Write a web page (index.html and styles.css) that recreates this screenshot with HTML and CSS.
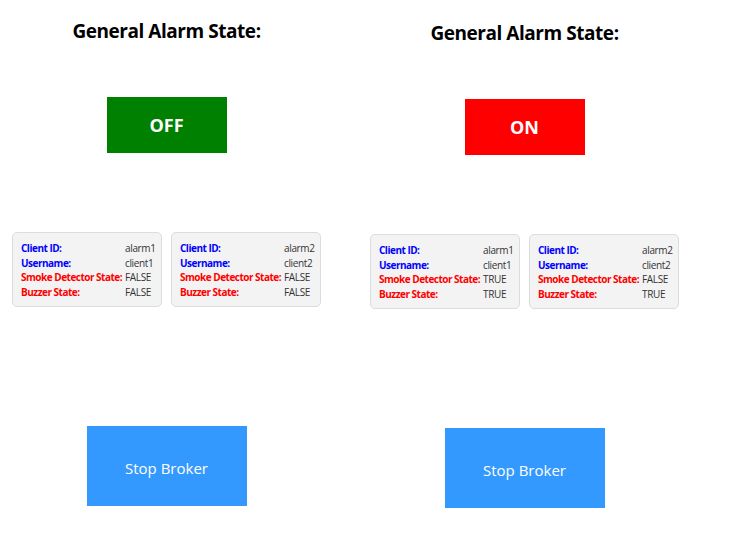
FILE: index.html
```html
<!DOCTYPE html>
<html>
<head>
<meta charset="utf-8">
<link rel="stylesheet" href="styles.css">
</head>
<body>
<div class="screens">
  <section class="panel">
    <h2 class="title">General Alarm State:</h2>
    <div class="state state-off">OFF</div>
    <div class="cards">
      <div class="card">
        <span class="lbl id">Client ID:</span><span class="val">alarm1</span>
        <span class="lbl id">Username:</span><span class="val">client1</span>
        <span class="lbl st">Smoke Detector State:</span><span class="val">FALSE</span>
        <span class="lbl st">Buzzer State:</span><span class="val">FALSE</span>
      </div>
      <div class="card">
        <span class="lbl id">Client ID:</span><span class="val">alarm2</span>
        <span class="lbl id">Username:</span><span class="val">client2</span>
        <span class="lbl st">Smoke Detector State:</span><span class="val">FALSE</span>
        <span class="lbl st">Buzzer State:</span><span class="val">FALSE</span>
      </div>
    </div>
    <button class="broker">Stop Broker</button>
  </section>
  <section class="panel panel-second">
    <h2 class="title">General Alarm State:</h2>
    <div class="state state-on">ON</div>
    <div class="cards">
      <div class="card">
        <span class="lbl id">Client ID:</span><span class="val">alarm1</span>
        <span class="lbl id">Username:</span><span class="val">client1</span>
        <span class="lbl st">Smoke Detector State:</span><span class="val">TRUE</span>
        <span class="lbl st">Buzzer State:</span><span class="val">TRUE</span>
      </div>
      <div class="card">
        <span class="lbl id">Client ID:</span><span class="val">alarm2</span>
        <span class="lbl id">Username:</span><span class="val">client2</span>
        <span class="lbl st">Smoke Detector State:</span><span class="val">FALSE</span>
        <span class="lbl st">Buzzer State:</span><span class="val">TRUE</span>
      </div>
    </div>
    <button class="broker">Stop Broker</button>
  </section>
</div>
</body>
</html>
```
FILE: styles.css
```css
html, body {
  margin: 0;
  padding: 0;
  background: #ffffff;
}
body {
  font-family: "Open Sans", "Noto Sans", sans-serif;
  color: #000;
}
.screens {
  display: flex;
  gap: 25px;
}
.panel {
  width: 333px;
  display: flex;
  flex-direction: column;
  align-items: center;
  padding-top: 19px;
}
.panel-second {
  padding-top: 21px;
}
.title {
  margin: 0;
  font-size: 19px;
  line-height: 24px;
  font-weight: 700;
  letter-spacing: -0.45px;
}
.state {
  margin-top: 54px;
  width: 120px;
  height: 56px;
  display: flex;
  align-items: center;
  justify-content: center;
  color: #fff;
  font-weight: 700;
  font-size: 18px;
}
.state-off { background: #008000; }
.state-on { background: #ff0000; }
.cards {
  margin-top: 79px;
  display: flex;
  gap: 9px;
}
.card {
  width: 150px;
  box-sizing: border-box;
  height: 75px;
  padding: 8px 6px 8px 8px;
  background: #f3f3f3;
  border: 1px solid #dcdcdc;
  border-radius: 5px;
  display: grid;
  grid-template-columns: 104px auto;
  font-size: 10px;
  line-height: 14.5px;
  align-content: start;
}
.lbl {
  font-weight: 700;
  white-space: nowrap;
  letter-spacing: -0.5px;
}
.lbl.id { color: #0000ff; }
.lbl.st { color: #ff0000; }
.val {
  color: #333;
  white-space: nowrap;
  letter-spacing: -0.35px;
}
.broker {
  margin-top: 119px;
  width: 160px;
  height: 80px;
  border: none;
  background: #3399ff;
  color: #fff;
  font-family: "Open Sans", "Noto Sans", sans-serif;
  font-size: 15px;
  padding: 0 0 0 0;
  line-height: 1;
  padding-top: 4px;
}
```
